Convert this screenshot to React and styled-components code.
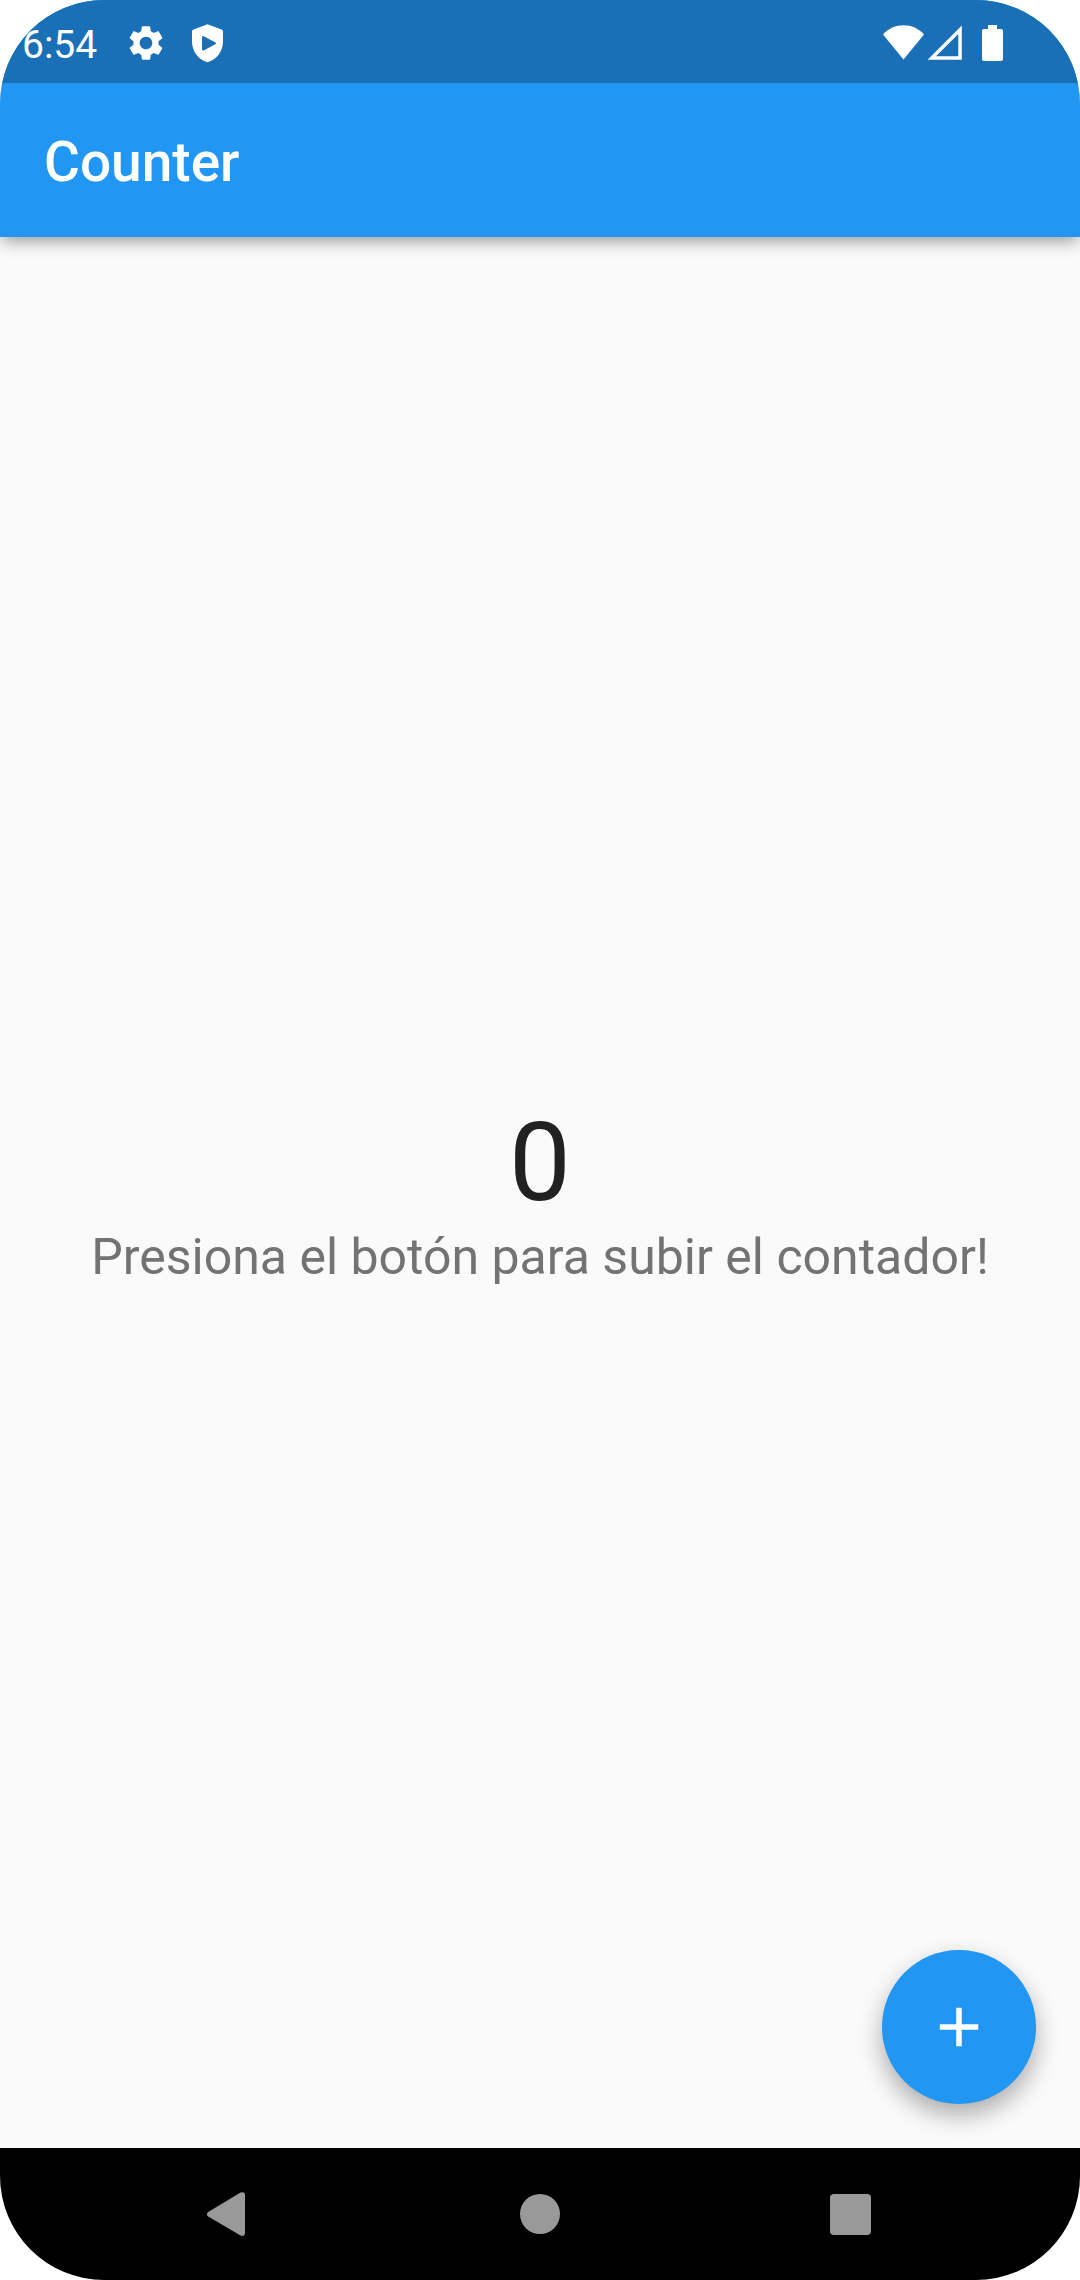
import React, { useState } from "react";
import styled, { createGlobalStyle } from "styled-components";

const GlobalStyle = createGlobalStyle`
  *, *::before, *::after { box-sizing: border-box; }
  body {
    margin: 0;
    background: #ffffff;
    font-family: Roboto, "Noto Sans", sans-serif;
  }
`;

const Screen = styled.div`
  display: flex;
  flex-direction: column;
  min-height: 100vh;
  overflow: hidden;
  border-radius: 104px;
  background: #fafafa;
`;

const TopArea = styled.header`
  background: #2196f3;
  box-shadow: 0 6px 16px -2px rgba(0, 0, 0, 0.4);
`;

const StatusBar = styled.div`
  display: flex;
  justify-content: space-between;
  align-items: flex-start;
  height: 83px;
  padding: 22px 66px 0 22px;
  background: #1a70b7;
  color: #ffffff;
`;

const StatusGroup = styled.div`
  display: flex;
  align-items: flex-start;
  gap: ${(p) => p.$gap || 0}px;
`;

const Time = styled.time`
  margin-right: 8px;
  font-size: 39px;
  line-height: 46px;
`;

const StatusIcon = styled.svg`
  display: block;
  width: 42px;
  height: 42px;
  fill: currentColor;
`;

const AppBar = styled.div`
  display: flex;
  align-items: center;
  height: 154px;
  padding: 4px 44px 0;
`;

const Title = styled.h1`
  margin: 0;
  color: #ffffff;
  font-size: 55px;
  font-weight: 500;
  line-height: 64px;
`;

const Body = styled.main`
  position: relative;
  flex: 1;
  display: flex;
  flex-direction: column;
  align-items: center;
  justify-content: center;
  text-align: center;
`;

const Count = styled.output`
  color: #212121;
  font-size: 110px;
  line-height: 129px;
`;

const Hint = styled.p`
  margin: 0;
  color: #737373;
  font-size: 50px;
  line-height: 60px;
`;

const AddButton = styled.button`
  position: absolute;
  right: 44px;
  bottom: 44px;
  display: flex;
  align-items: center;
  justify-content: center;
  width: 154px;
  height: 154px;
  padding: 0;
  border: 0;
  border-radius: 50%;
  background: #2196f3;
  color: #ffffff;
  box-shadow: 0 11px 24px rgba(0, 0, 0, 0.32);
  cursor: pointer;
`;

const AddIcon = styled.svg`
  width: 66px;
  height: 66px;
  fill: currentColor;
`;

const NavBar = styled.nav`
  display: flex;
  height: 132px;
  padding: 0 75px;
  background: #000000;
`;

const NavButton = styled.button`
  flex: 1;
  display: flex;
  align-items: center;
  justify-content: center;
  padding: 0;
  border: 0;
  background: transparent;
  color: #999999;
  cursor: pointer;
`;

const NavIcon = styled.svg`
  width: 56px;
  height: 56px;
  fill: currentColor;
`;

export default function App() {
  const [count, setCount] = useState(0);

  return (
    <>
      <GlobalStyle />
      <Screen>
        <TopArea>
          <StatusBar>
            <StatusGroup $gap={20}>
              <Time>6:54</Time>
              <StatusIcon viewBox="0 0 24 24" aria-hidden="true">
                <path d="M19.14 12.94c.04-.3.06-.61.06-.94 0-.32-.02-.64-.07-.94l2.03-1.58c.18-.14.23-.41.12-.61l-1.92-3.32c-.12-.22-.37-.29-.59-.22l-2.39.96c-.5-.38-1.03-.7-1.62-.94l-.36-2.54c-.04-.24-.24-.41-.48-.41h-3.84c-.24 0-.43.17-.47.41l-.36 2.54c-.59.24-1.13.57-1.62.94l-2.39-.96c-.22-.08-.47 0-.59.22L2.74 8.87c-.12.21-.08.47.12.61l2.03 1.58c-.05.3-.09.63-.09.94s.02.64.07.94l-2.03 1.58c-.18.14-.23.41-.12.61l1.92 3.32c.12.22.37.29.59.22l2.39-.96c.5.38 1.03.7 1.62.94l.36 2.54c.05.24.24.41.48.41h3.84c.24 0 .44-.17.47-.41l.36-2.54c.59-.24 1.13-.56 1.62-.94l2.39.96c.22.08.47 0 .59-.22l1.92-3.32c.12-.22.07-.47-.12-.61l-2.01-1.58zM12 15.6c-1.98 0-3.6-1.62-3.6-3.6s1.62-3.6 3.6-3.6 3.6 1.62 3.6 3.6-1.62 3.6-3.6 3.6z" />
              </StatusIcon>
              <StatusIcon viewBox="0 0 42 42" aria-hidden="true">
                <path
                  fillRule="evenodd"
                  d="M20.500 2.300 L34.500 7.500 Q36 8 36 9.600 V19.500 C36 29 30 37.500 20.500 40.200 C11 37.500 5 29 5 19.500 V9.600 Q5 8 6.500 7.500 Z M15 15.500 V27.500 Q15.300 29 16.700 28.400 L28.700 22 Q29.500 21.300 28.700 20.600 L16.700 14.200 Q15.300 13.800 15 15.500 Z"
                />
              </StatusIcon>
            </StatusGroup>
            <StatusGroup $gap={5}>
              <StatusGroup>
                <StatusIcon viewBox="0 0 42 42" aria-hidden="true">
                  <path d="M20.500 37.500 L0 12.500 C5.500 6.500 12.500 3.300 20.500 3.300 C28.500 3.300 35.500 6.500 41 12.500 Z" />
                </StatusIcon>
                <StatusIcon viewBox="0 0 42 42" aria-hidden="true">
                  <path fillRule="evenodd" d="M2.600 37.700 L36.800 3.500 V37.700 Z M11 34.200 H33.300 V11.900 Z" />
                </StatusIcon>
              </StatusGroup>
              <StatusIcon viewBox="0 0 42 42" aria-hidden="true">
                <path d="M16 3 H25 V7 H29 Q31 7 31 9 V37 Q31 39 29 39 H12 Q10 39 10 37 V9 Q10 7 12 7 H16 Z" />
              </StatusIcon>
            </StatusGroup>
          </StatusBar>
          <AppBar>
            <Title>Counter</Title>
          </AppBar>
        </TopArea>

        <Body>
          <Count>{count}</Count>
          <Hint>Presiona el botón para subir el contador!</Hint>
          <AddButton type="button" aria-label="Sumar uno" onClick={() => setCount(count + 1)}>
            <AddIcon viewBox="0 0 24 24" aria-hidden="true">
              <path d="M19 13h-6v6h-2v-6H5v-2h6V5h2v6h6v2z" />
            </AddIcon>
          </AddButton>
        </Body>

        <NavBar>
          <NavButton type="button" aria-label="Atrás">
            <NavIcon viewBox="0 0 56 56" aria-hidden="true">
              <path d="M6.200 26 L38.500 6.600 Q43 5 43 9.500 V46.500 Q43 51 38.500 49.600 L6.200 30.600 Q3.500 28.300 6.200 26 Z" />
            </NavIcon>
          </NavButton>
          <NavButton type="button" aria-label="Inicio">
            <NavIcon viewBox="0 0 56 56" aria-hidden="true">
              <circle cx="28" cy="28" r="20" />
            </NavIcon>
          </NavButton>
          <NavButton type="button" aria-label="Recientes">
            <NavIcon viewBox="0 0 56 56" aria-hidden="true">
              <rect x="8" y="8" width="41" height="41" rx="4" />
            </NavIcon>
          </NavButton>
        </NavBar>
      </Screen>
    </>
  );
}
